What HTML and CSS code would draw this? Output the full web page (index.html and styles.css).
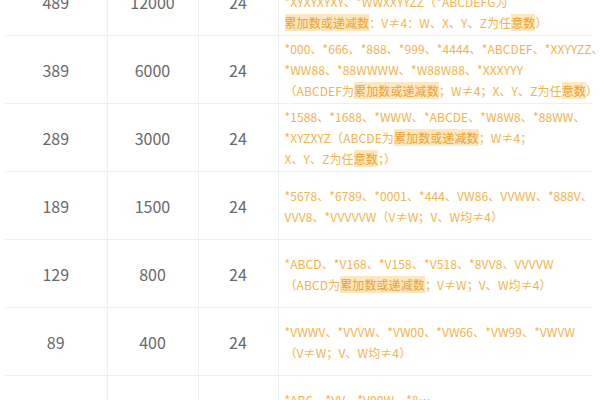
FILE: index.html
```html
<!DOCTYPE html>
<html lang="zh-CN">
<head>
<meta charset="utf-8">
<title>靓号价格表</title>
<link rel="stylesheet" href="styles.css">
</head>
<body>
<table class="price-table">
  <colgroup>
    <col class="col-price">
    <col class="col-fee">
    <col class="col-term">
    <col class="col-rule">
  </colgroup>
  <tbody>
    <tr>
      <td class="num">489</td>
      <td class="num">12000</td>
      <td class="num">24</td>
      <td class="rule">*XXXXXXXX、*XXXXYYYY、*XXYYXXYY、<br>*XYXYXYXY、*WWXXYYZZ（*ABCDEFG为<br><span class="hl">累加数或递减数</span>：V≠4：W、X、Y、Z为任<span class="hl">意数</span>）</td>
    </tr>
    <tr>
      <td class="num">389</td>
      <td class="num">6000</td>
      <td class="num">24</td>
      <td class="rule">*000、*666、*888、*999、*4444、*ABCDEF、*XXYYZZ、<br>*WW88、*88WWWW、*W88W88、*XXXYYY<br>（ABCDEF为<span class="hl">累加数或递减数</span>；W≠4；X、Y、Z为任<span class="hl">意数</span>）</td>
    </tr>
    <tr>
      <td class="num">289</td>
      <td class="num">3000</td>
      <td class="num">24</td>
      <td class="rule">*1588、*1688、*WWW、*ABCDE、*W8W8、*88WW、<br>*XYZXYZ（ABCDE为<span class="hl">累加数或递减数</span>；W≠4；<br>X、Y、Z为任<span class="hl">意数</span>；）</td>
    </tr>
    <tr>
      <td class="num">189</td>
      <td class="num">1500</td>
      <td class="num">24</td>
      <td class="rule">*5678、*6789、*0001、*444、VW86、VVWW、*888V、<br>VVV8、*VVVVVW（V≠W；V、W均≠4）</td>
    </tr>
    <tr>
      <td class="num">129</td>
      <td class="num">800</td>
      <td class="num">24</td>
      <td class="rule">*ABCD、*V168、*V158、*V518、*8VV8、VVVVW<br>（ABCD为<span class="hl">累加数或递减数</span>；V≠W；V、W均≠4）</td>
    </tr>
    <tr>
      <td class="num">89</td>
      <td class="num">400</td>
      <td class="num">24</td>
      <td class="rule">*VWWV、*VVVW、*VW00、*VW66、*VW99、*VWVW<br>（V≠W；V、W均≠4）</td>
    </tr>
    <tr>
      <td class="num">69</td>
      <td class="num">200</td>
      <td class="num">24</td>
      <td class="rule">*ABC、*VV、*V00W、*8…<br>（V≠W；V、W均≠4）</td>
    </tr>
  </tbody>
</table>
</body>
</html>
```

FILE: styles.css
```css
html, body {
  margin: 0;
  padding: 0;
  background: #ffffff;
  overflow: hidden;
}

body {
  font-family: "Noto Sans CJK SC", "Noto Sans", sans-serif;
}

.price-table {
  margin: -32px 0 0 5px;
  width: 587px;
  border-collapse: collapse;
  table-layout: fixed;
}

.col-price { width: 102px; }
.col-fee { width: 91px; }
.col-term { width: 80px; }
.col-rule { width: 314px; }

.price-table td {
  height: 67px;
  padding: 0;
  border-bottom: 1px solid #efefef;
  vertical-align: middle;
}

.price-table td + td {
  border-left: 1px solid #efefef;
}

.num {
  text-align: center;
  font-size: 16px;
  color: #6a6a6a;
}

.rule {
  padding-left: 6px !important;
  font-size: 12px;
  line-height: 21px;
  letter-spacing: 0.1px;
  color: #f4b24c;
  white-space: nowrap;
  overflow: visible;
}

.hl {
  color: #eda12a;
  background: #fde7c0;
}
```
